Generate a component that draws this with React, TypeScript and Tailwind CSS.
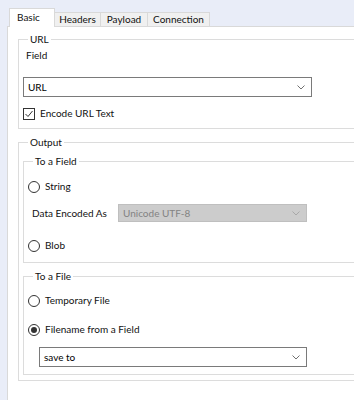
import React from "react";

function Chevron({ color = "#606060" }: { color?: string }) {
  return (
    <svg width="8" height="5" viewBox="0 0 8 5" className="shrink-0">
      <path d="M0.5 0.5 L4 4 L7.5 0.5" fill="none" stroke={color} strokeWidth="1" />
    </svg>
  );
}

function Dropdown({
  value,
  className,
  disabled = false,
}: {
  value: string;
  className: string;
  disabled?: boolean;
}) {
  return (
    <div
      className={`flex items-center justify-between pl-[4px] pr-[6px] border ${
        disabled
          ? "bg-[#cccccc] border-[#bfbfbf] text-[#838383]"
          : "bg-white border-[#7a7a7a] text-black"
      } ${className}`}
    >
      <span>{value}</span>
      <Chevron color={disabled ? "#a8a8a8" : "#707070"} />
    </div>
  );
}

function Radio({ label, checked = false }: { label: string; checked?: boolean }) {
  return (
    <div className="flex items-center gap-[5px] h-[13px]">
      <span className="w-[12px] h-[12px] rounded-full border border-[#333333] bg-white flex items-center justify-center">
        {checked && <span className="w-[6px] h-[6px] rounded-full bg-[#333333]" />}
      </span>
      <span>{label}</span>
    </div>
  );
}

function Group({
  title,
  className,
  children,
}: {
  title: string;
  className: string;
  children: React.ReactNode;
}) {
  return (
    <fieldset className={`border border-[#dcdcdc] ${className}`}>
      <legend className="ml-[5px] px-[2px] leading-[13px]">{title}</legend>
      {children}
    </fieldset>
  );
}

const tabs = [
  { name: "Headers", w: "w-[46px]" },
  { name: "Payload", w: "w-[47px]" },
  { name: "Connection", w: "w-[62px]" },
];

export default function App() {
  return (
    <div className="w-[354px] h-[400px] overflow-hidden bg-[#e9edf8] pl-[7px] pt-[8px] font-['Lato',sans-serif] text-[10px] leading-[13px] text-[#111111]">
      {/* Tabs */}
      <div className="flex items-end h-[18px] ml-[2px]">
        <div className="relative z-10 w-[46px] h-[19px] -mb-px bg-white border border-b-0 border-[#d9d9d9] pl-[7px] pt-[2px]">
          Basic
        </div>
        {tabs.map((t) => (
          <div
            key={t.name}
            className={`${t.w} h-[14px] bg-[#f0f0f0] border border-b-0 border-l-0 border-[#d9d9d9] flex items-center justify-center`}
          >
            {t.name}
          </div>
        ))}
      </div>

      {/* Panel */}
      <div className="h-[400px] bg-white border-t border-l border-[#d9d9d9] pl-[10px] pt-[6px]">
        <Group title="URL" className="-mr-[30px] pl-[4px] pb-[8px]">
          <div className="mt-[3px] ml-[3px]">Field</div>
          <Dropdown value="URL" className="mt-[15px] w-[289px] h-[20px]" />
          <div className="mt-[10px] flex items-center gap-[5px] h-[13px]">
            <span className="w-[12px] h-[12px] border border-[#333333] bg-white flex items-center justify-center">
              <svg width="10" height="10" viewBox="0 0 10 10">
                <path d="M1.5 5 L4 7.5 L8.5 2" fill="none" stroke="#333333" strokeWidth="1" />
              </svg>
            </span>
            <span>Encode URL Text</span>
          </div>
        </Group>

        <Group title="Output" className="mt-[7px] -mr-[30px] pl-[4px] pb-[5px]">
          <Group title="To a Field" className="mt-[6px] mr-[4px] pl-[4px] pb-[10px]">
            <div className="mt-[12px]">
              <Radio label="String" />
            </div>
            <div className="mt-[11px] flex items-center pl-[4px]">
              <span className="w-[86px] min-w-0 shrink-0 whitespace-nowrap">Data Encoded As</span>
              <Dropdown value="Unicode UTF-8" disabled className="w-[189px] h-[18px]" />
            </div>
            <div className="mt-[17px]">
              <Radio label="Blob" />
            </div>
          </Group>

          <Group title="To a File" className="mt-[7px] mr-[4px] pl-[4px] pb-[7px]">
            <div className="mt-[11px]">
              <Radio label="Temporary File" />
            </div>
            <div className="mt-[16px]">
              <Radio label="Filename from a Field" checked />
            </div>
            <Dropdown value="save to" className="mt-[11px] ml-[11px] w-[268px] h-[20px]" />
          </Group>
        </Group>
      </div>
    </div>
  );
}
